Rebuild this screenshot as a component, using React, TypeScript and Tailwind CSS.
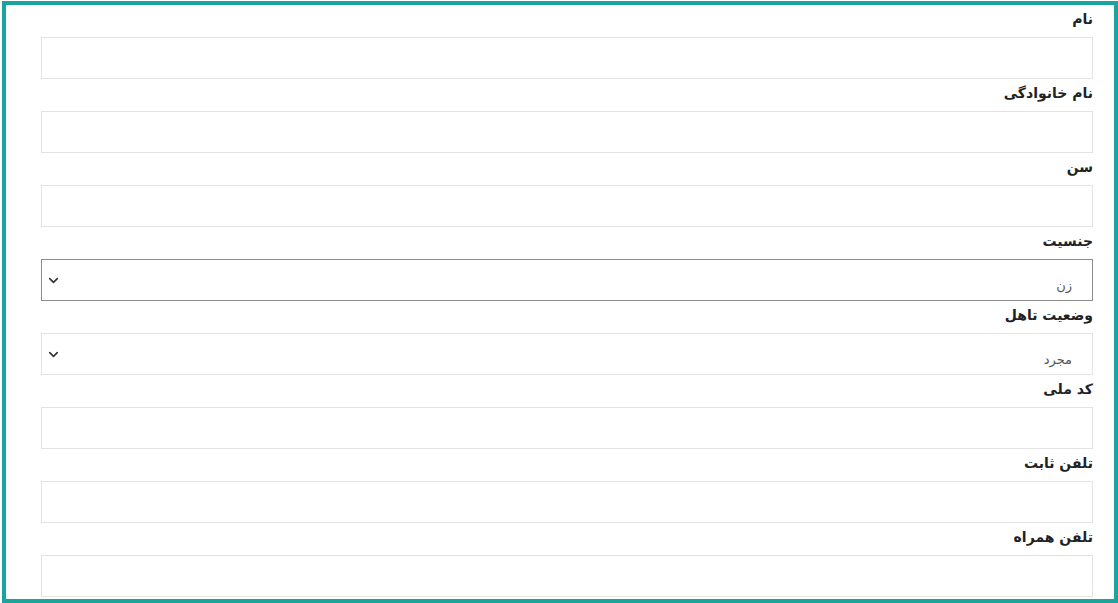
import { ChevronDown } from 'lucide-react'

type Field = { label: string; kind: 'input' | 'select'; value?: string; focused?: boolean }

const fields: Field[] = [
  { label: 'نام', kind: 'input' },
  { label: 'نام خانوادگی', kind: 'input' },
  { label: 'سن', kind: 'input' },
  { label: 'جنسیت', kind: 'select', value: 'زن', focused: true },
  { label: 'وضعیت تاهل', kind: 'select', value: 'مجرد' },
  { label: 'کد ملی', kind: 'input' },
  { label: 'تلفن ثابت', kind: 'input' },
  { label: 'تلفن همراه', kind: 'input' },
]

function Row({ f }: { f: Field }) {
  return (
    <div className="flex flex-col">
      <div className="h-[32px] pt-[4px] text-right text-[14px] leading-[20px] font-bold text-[#222]">
        {f.label}
      </div>
      {f.kind === 'input' ? (
        <div className="h-[42px] border border-[#e3e3e3] bg-white" />
      ) : (
        <div
          className={
            f.focused
              ? 'h-[42px] border border-[#8c8c8c] bg-white flex items-center justify-between pl-[4px] pr-[20px]'
              : 'h-[42px] border border-[#e3e3e3] bg-white flex items-center justify-between pl-[4px] pr-[20px]'
          }
        >
          <span className="pt-[12px] text-[13px] text-[#555] tracking-[2px]">{f.value}</span>
          <ChevronDown size={15} strokeWidth={2.6} className="text-[#333]" />
        </div>
      )}
    </div>
  )
}

export default function App() {
  return (
    <div
      dir="rtl"
      className="w-[1118px] h-[603px] bg-white pt-[1px] pl-[2px] overflow-hidden"
      style={{ fontFamily: '"DejaVu Sans", "Noto Sans", sans-serif' }}
    >
      <div className="w-[1116px] h-[602px] border-4 border-[#17a59d] overflow-hidden pr-[21px] pl-[35px]">
        {fields.map((f) => (
          <Row key={f.label} f={f} />
        ))}
      </div>
    </div>
  )
}
